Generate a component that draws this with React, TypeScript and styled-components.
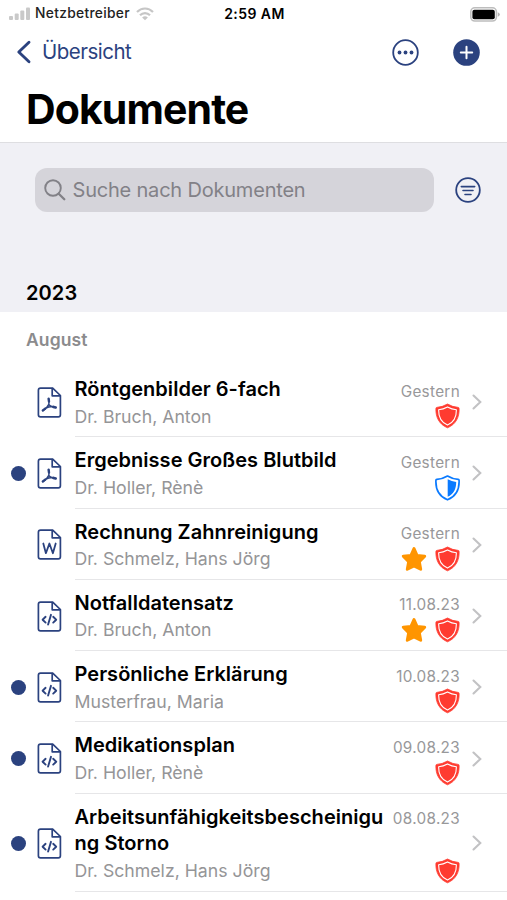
import React from "react";
import styled, { createGlobalStyle } from "styled-components";

const NAVY = "#2b427f";
const RED = "#ff3b30";
const BLUE = "#0a7aff";
const ORANGE = "#ff9500";

const GlobalStyle = createGlobalStyle`
  * { box-sizing: border-box; }
  body { margin: 0; background: #fff; }
`;

const Screen = styled.div`
  width: 507px;
  height: 900px;
  overflow: hidden;
  background: #fff;
  color: #000;
  font-family: Inter, "Liberation Sans", sans-serif;
  line-height: 1;
  white-space: nowrap;
  display: flex;
  flex-direction: column;
  svg { display: block; flex: none; }
`;

const StatusBar = styled.header`
  height: 28px;
  flex: none;
  display: grid;
  grid-template-columns: 1fr auto 1fr;
  align-items: center;
  padding: 0 7px 0 9px;
`;

const Carrier = styled.div`
  display: flex;
  align-items: center;
  font-size: 13.8px;
  font-weight: 500;
  letter-spacing: 0.3px;
  color: #222;
`;

const CarrierName = styled.span`
  margin: 0 6px 0 4px;
`;

const Clock = styled.div`
  font-size: 14px;
  font-weight: 600;
  letter-spacing: 0.45px;
`;

const Battery = styled.div`
  justify-self: end;
`;

const NavBar = styled.nav`
  height: 48px;
  flex: none;
  display: flex;
  align-items: center;
  padding: 0 27px 0 16px;
`;

const BackLink = styled.div`
  display: flex;
  align-items: center;
  gap: 10px;
  flex: 1;
  color: ${NAVY};
  font-size: 20.5px;
  letter-spacing: -0.5px;
`;

const NavActions = styled.div`
  display: flex;
  gap: 34px;
`;

const PageTitle = styled.h1`
  height: 66px;
  flex: none;
  margin: 0;
  padding: 13px 0 0 26px;
  font-size: 41px;
  font-weight: 700;
  letter-spacing: -0.9px;
`;

const FilterPanel = styled.section`
  height: 170px;
  flex: none;
  background: #f0f0f5;
  border-top: 1px solid #dedee1;
  padding: 25px 26px 0 35px;
  display: flex;
  flex-direction: column;
`;

const SearchRow = styled.div`
  display: flex;
  align-items: center;
  justify-content: space-between;
`;

const SearchField = styled.div`
  width: 399px;
  height: 44px;
  border-radius: 12px;
  background: #d5d4da;
  color: #828187;
  display: flex;
  align-items: center;
  gap: 6.5px;
  padding-left: 9px;
  font-size: 20px;
  letter-spacing: -0.2px;
`;

const YearHeading = styled.h2`
  margin: 71px 0 0 -9px;
  font-size: 20px;
  font-weight: 600;
  letter-spacing: 0.1px;
`;

const MonthHeading = styled.h3`
  height: 54px;
  flex: none;
  margin: 0;
  padding: 19px 0 0 26px;
  font-size: 17.5px;
  font-weight: 600;
  letter-spacing: 0.1px;
  color: #8b8b8d;
`;

const DocumentList = styled.main`
  display: flex;
  flex-direction: column;
`;

const DocumentRow = styled.article<{ $tall?: boolean }>`
  height: ${(p) => (p.$tall ? 98 : 71.3)}px;
  flex: none;
  display: flex;
`;

const UnreadCell = styled.div`
  width: 37px;
  padding-left: 10.5px;
  padding-top: 1px;
  display: flex;
  align-items: center;
`;

const UnreadDot = styled.span`
  width: 15px;
  height: 15px;
  border-radius: 50%;
  background: ${NAVY};
`;

const TypeCell = styled.div`
  width: 37.5px;
  display: flex;
  align-items: center;
  padding-top: 1px;
`;

const RowBody = styled.div`
  flex: 1;
  display: flex;
  padding-right: 25px;
  border-bottom: 1px solid #e6e6e8;
`;

const Texts = styled.div`
  flex: 1;
  min-width: 0;
  padding-top: 10px;
`;

const DocTitle = styled.div`
  font-size: 20px;
  font-weight: 600;
  line-height: 26.5px;
  letter-spacing: 0.03px;
`;

const DocAuthor = styled.div`
  font-size: 17.7px;
  line-height: 27px;
  letter-spacing: 0;
  color: #959597;
`;

const Meta = styled.div`
  width: 70px;
  display: flex;
  flex-direction: column;
  align-items: flex-end;
  justify-content: space-between;
  padding: 17.5px 0 7px;
`;

const DateLabel = styled.div`
  font-size: 15.3px;
  letter-spacing: 0.3px;
  color: #98989a;
`;

const Badges = styled.div`
  display: flex;
  gap: 8px;
`;

const ChevronCell = styled.div`
  width: 22px;
  display: flex;
  align-items: center;
  justify-content: flex-end;
  padding-top: 2px;
`;

const SignalIcon = () => (
  <svg width="22" height="14" viewBox="0 0 22 14" fill="#c9c9c9">
    <rect x="0" y="9" width="4" height="4" rx="1" />
    <rect x="5.7" y="6.5" width="4" height="6.5" rx="1" />
    <rect x="11.3" y="3.5" width="4" height="9.5" rx="1" />
    <rect x="17" y="0.5" width="4" height="12.5" rx="1" />
  </svg>
);

const WifiIcon = () => (
  <svg width="18" height="14" viewBox="0 0 18 14">
    <g fill="none" stroke="#c6c6c6" strokeWidth="2.2">
      <path d="M1 5C5.5 .3 12.5 .3 17 5" />
      <path d="M4 8.3C6.8 5.4 11.2 5.4 14 8.3" />
    </g>
    <path d="M6.1 10.4Q9 8 11.9 10.4L9 13.3Z" fill="#c6c6c6" />
  </svg>
);

const BatteryIcon = () => (
  <svg width="30" height="15" viewBox="0 0 30 15">
    <rect x="0.8" y="0.8" width="25.6" height="13.2" rx="4" fill="#fff" stroke="#bdbdbd" strokeWidth="1.6" />
    <rect x="2.4" y="2.7" width="22.4" height="9.6" rx="2" fill="#000" />
    <path d="M27.8 5.2Q29.8 6 29.8 7.5T27.8 9.8Z" fill="#b4b4b4" />
  </svg>
);

const BackIcon = () => (
  <svg width="16" height="24" viewBox="0 0 16 24" fill="none" stroke={NAVY} strokeWidth="2.9" strokeLinecap="round" strokeLinejoin="round">
    <path d="M13 2.3L2.8 12L13 21.7" />
  </svg>
);

const MoreIcon = () => (
  <svg width="27" height="27" viewBox="0 0 27 27">
    <circle cx="13.5" cy="13.5" r="12.3" fill="none" stroke={NAVY} strokeWidth="1.8" />
    <g fill={NAVY}>
      <circle cx="7.5" cy="13.5" r="1.9" />
      <circle cx="13.5" cy="13.5" r="1.9" />
      <circle cx="19.5" cy="13.5" r="1.9" />
    </g>
  </svg>
);

const AddIcon = () => (
  <svg width="27" height="27" viewBox="0 0 27 27">
    <circle cx="13.5" cy="13.5" r="13.3" fill={NAVY} />
    <path d="M13.5 7.8V19.2M7.8 13.5H19.2" stroke="#fff" strokeWidth="2" strokeLinecap="round" />
  </svg>
);

const SearchIcon = () => (
  <svg width="22" height="22" viewBox="0 0 22 22" fill="none" stroke="#828187" strokeWidth="1.9" strokeLinecap="round">
    <circle cx="9" cy="9" r="7.8" />
    <path d="M14.7 14.7L20.3 20.3" strokeWidth="2.3" />
  </svg>
);

const FilterIcon = () => (
  <svg width="26" height="26" viewBox="0 0 26 26" fill="none" stroke={NAVY} strokeWidth="1.8" strokeLinecap="round">
    <circle cx="13" cy="13" r="11.8" />
    <path d="M6.3 9.6H19.7M8 13.5H18M10 17.5H16" strokeWidth="1.6" />
  </svg>
);

type FileKind = "pdf" | "word" | "code";

const FileIcon = ({ kind }: { kind: FileKind }) => (
  <svg width="25" height="31" viewBox="0 0 25 31" fill="none" stroke={NAVY} strokeWidth="1.7" strokeLinecap="round" strokeLinejoin="round">
    <path d="M15.7 1.2H3.5Q1.4 1.2 1.4 3.3V27.7Q1.4 29.8 3.5 29.8H21.3Q23.4 29.8 23.4 27.7V8.5Z" />
    <path d="M15.2 1.5V8.8H23" />
    {kind === "pdf" && (
      <>
        <path d="M11.7 12Q12.3 14.5 11.8 17.3Q10 21 6 23.8M11.8 17.3Q13.5 19.8 18.5 20.5M8.3 21.3Q12 19.3 17 19.6" strokeWidth="1.5" />
        <path d="M11.6 11.6L12 14.5M5.8 23.4L8.2 21.6M16.3 20L18.8 20.5" strokeWidth="2.4" />
      </>
    )}
    {kind === "word" && <path d="M6.3 14.5L8.9 24.2L12.4 14.5L15.9 24.2L18.7 14.5" strokeWidth="1.8" />}
    {kind === "code" && <path d="M8.6 15.8L5.6 18.7L8.6 21.6M16.2 15.8L19.2 18.7L16.2 21.6M14 13.8L11.1 23.6" strokeWidth="1.9" />}
  </svg>
);

const SHIELD = "M12.5 1Q17.5 4 23.2 4.4Q24.1 4.5 24.1 5.6C24.4 14 21 21.4 12.5 24.8C4 21.4 .6 14 .9 5.6Q.9 4.5 1.8 4.4Q7.500 4 12.500 1Z";
const SHIELD_INNER = "M12.5 3.9Q16.700 6.300 21.400 6.700C21.500 13.500 19 19.200 12.500 22.100C6 19.200 3.500 13.500 3.600 6.700Q8.300 6.300 12.500 3.900Z";

const ShieldIcon = ({ half }: { half?: boolean }) =>
  half ? (
    <svg width="25" height="26" viewBox="0 0 25 26">
      <path d={SHIELD} fill="#fff" stroke={BLUE} strokeWidth="1.7" strokeLinejoin="round" />
      <path d="M12.7 4.2Q16.7 6.5 21.2 6.9C21.2 13.5 18.8 19 12.7 21.8Z" fill={BLUE} />
    </svg>
  ) : (
    <svg width="25" height="26" viewBox="0 0 25 26">
      <path d={SHIELD} fill={RED} stroke={RED} strokeWidth="0.8" strokeLinejoin="round" />
      <path d={SHIELD_INNER} fill="none" stroke="#fff" strokeWidth="1.1" strokeLinejoin="round" />
    </svg>
  );

const StarIcon = () => (
  <svg width="26" height="26" viewBox="0 0 26 26">
    <path d="M13 2.6L16 9.4L23.7 10.2L18.3 15.8L19.700 23.200L13 19.800L6.300 23.200L7.700 15.800L2.300 10.200L10 9.400Z" fill={ORANGE} stroke={ORANGE} strokeWidth="3" strokeLinejoin="round" />
  </svg>
);

const ChevronIcon = () => (
  <svg width="10" height="16" viewBox="0 0 10 16" fill="none" stroke="#c2c2c4" strokeWidth="2.1" strokeLinecap="round" strokeLinejoin="miter">
    <path d="M1.5 1.5L8.3 8L1.5 14.5" />
  </svg>
);

interface Doc {
  title: string[];
  author: string;
  date: string;
  kind: FileKind;
  unread?: boolean;
  starred?: boolean;
  half?: boolean;
}

const documents: Doc[] = [
  { title: ["Röntgenbilder 6-fach"], author: "Dr. Bruch, Anton", date: "Gestern", kind: "pdf" },
  { title: ["Ergebnisse Großes Blutbild"], author: "Dr. Holler, Rènè", date: "Gestern", kind: "pdf", unread: true, half: true },
  { title: ["Rechnung Zahnreinigung"], author: "Dr. Schmelz, Hans Jörg", date: "Gestern", kind: "word", starred: true },
  { title: ["Notfalldatensatz"], author: "Dr. Bruch, Anton", date: "11.08.23", kind: "code", starred: true },
  { title: ["Persönliche Erklärung"], author: "Musterfrau, Maria", date: "10.08.23", kind: "code", unread: true },
  { title: ["Medikationsplan"], author: "Dr. Holler, Rènè", date: "09.08.23", kind: "code", unread: true },
  { title: ["Arbeitsunfähigkeitsbescheinigu", "ng Storno"], author: "Dr. Schmelz, Hans Jörg", date: "08.08.23", kind: "code", unread: true },
];

export default function App() {
  return (
    <Screen>
      <GlobalStyle />
      <StatusBar>
        <Carrier>
          <SignalIcon />
          <CarrierName>Netzbetreiber</CarrierName>
          <WifiIcon />
        </Carrier>
        <Clock>2:59 AM</Clock>
        <Battery>
          <BatteryIcon />
        </Battery>
      </StatusBar>
      <NavBar>
        <BackLink>
          <BackIcon />
          Übersicht
        </BackLink>
        <NavActions>
          <MoreIcon />
          <AddIcon />
        </NavActions>
      </NavBar>
      <PageTitle>Dokumente</PageTitle>
      <FilterPanel>
        <SearchRow>
          <SearchField>
            <SearchIcon />
            Suche nach Dokumenten
          </SearchField>
          <FilterIcon />
        </SearchRow>
        <YearHeading>2023</YearHeading>
      </FilterPanel>
      <MonthHeading>August</MonthHeading>
      <DocumentList>
        {documents.map((doc) => (
          <DocumentRow key={doc.title[0]} $tall={doc.title.length > 1}>
            <UnreadCell>{doc.unread && <UnreadDot />}</UnreadCell>
            <TypeCell>
              <FileIcon kind={doc.kind} />
            </TypeCell>
            <RowBody>
              <Texts>
                {doc.title.map((line) => (
                  <DocTitle key={line}>{line}</DocTitle>
                ))}
                <DocAuthor>{doc.author}</DocAuthor>
              </Texts>
              <Meta>
                <DateLabel>{doc.date}</DateLabel>
                <Badges>
                  {doc.starred && <StarIcon />}
                  <ShieldIcon half={doc.half} />
                </Badges>
              </Meta>
              <ChevronCell>
                <ChevronIcon />
              </ChevronCell>
            </RowBody>
          </DocumentRow>
        ))}
      </DocumentList>
    </Screen>
  );
}
